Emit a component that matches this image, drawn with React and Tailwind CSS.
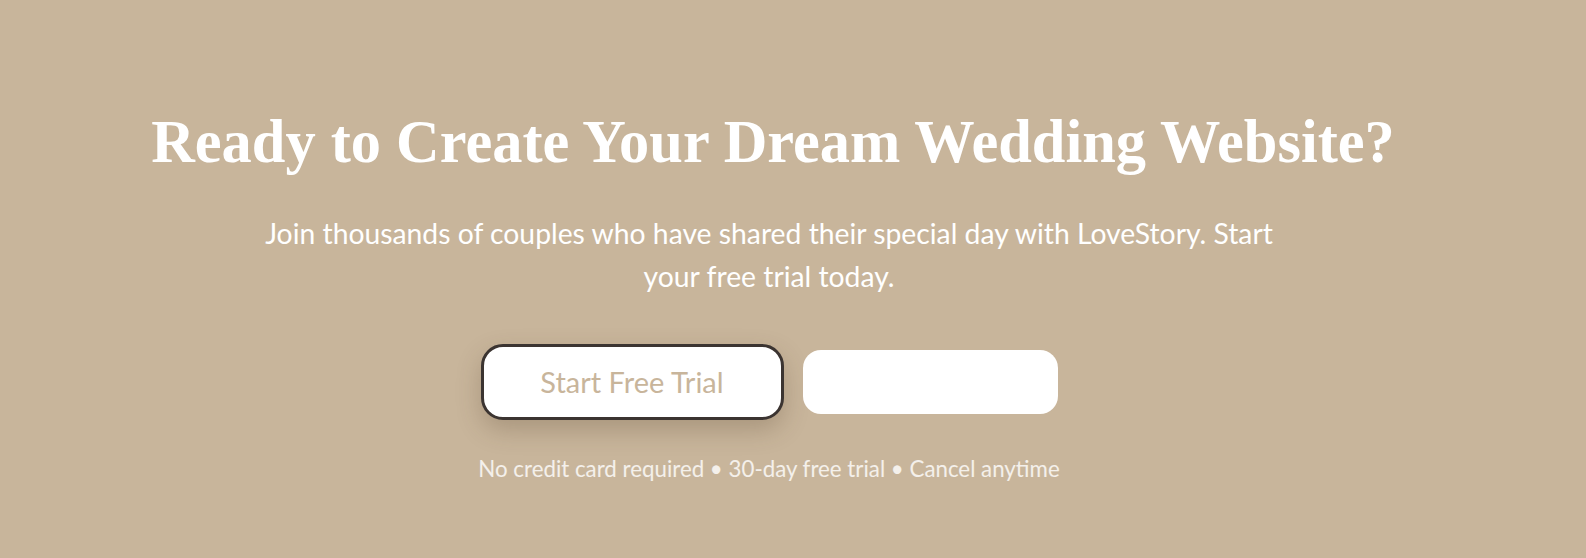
export default function App() {
  return (
    <section className="w-full min-h-[558px] bg-[#c8b59b] flex flex-col items-center pt-[106px] pb-[75px] pl-0 pr-[48px] font-['Lato','Liberation_Sans',sans-serif]">
      <h2 className="ml-[8px] text-white text-[60.4px] leading-[72px] font-bold text-center font-['Liberation_Serif','Times_New_Roman',serif]">
        Ready to Create Your Dream Wedding Website?
      </h2>

      <p className="mt-[34px] max-w-[1030px] text-center text-white text-[28.3px] leading-[43px]">
        Join thousands of couples who have shared their special day with LoveStory. Start your free trial today.
      </p>

      <div className="mt-[46px] flex items-center gap-[19px]">
        <button className="w-[303px] h-[76px] rounded-[22px] bg-white border-[3px] border-[#3b3431] text-[#c8b59b] text-[29px] shadow-[0_10px_24px_rgba(80,60,40,0.25)]">
          Start Free Trial
        </button>
        <button className="w-[255px] h-[64px] rounded-[18px] bg-white text-white text-[22px]">
          Watch Demo
        </button>
      </div>

      <p className="mt-[35px] text-[22.3px] leading-[28px] text-white/80 text-center">
        No credit card required • 30-day free trial • Cancel anytime
      </p>
    </section>
  );
}
